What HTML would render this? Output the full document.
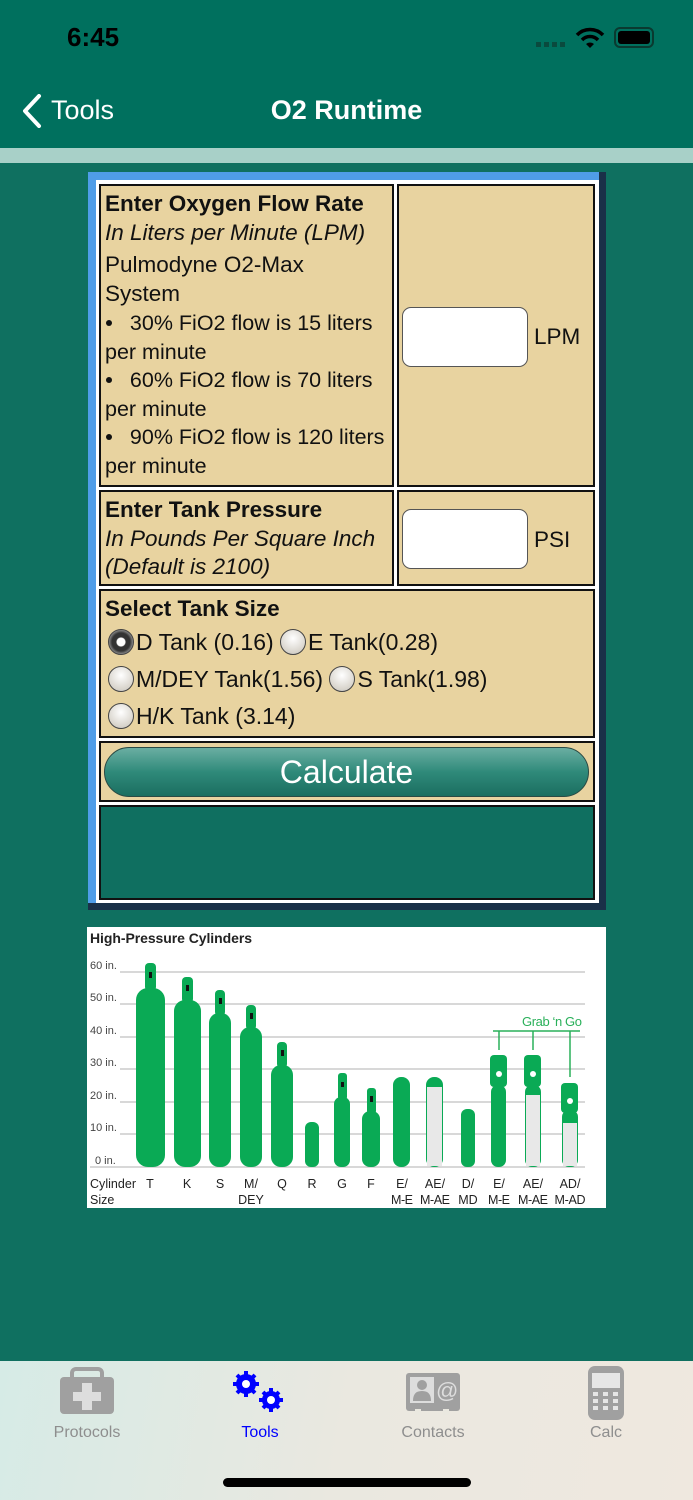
<!DOCTYPE html>
<html><head><meta charset="utf-8"><style>
*{margin:0;padding:0;box-sizing:border-box}
body{width:693px;height:1500px;position:relative;background:#0f7060;font-family:"Liberation Sans",sans-serif;overflow:hidden}
.a{position:absolute}
.cell{position:absolute;background:#e8d3a0;border:2px solid #111}
.t{font-size:22.5px;line-height:28.5px;color:#111;white-space:nowrap}
.b{display:inline-block;width:6px;height:6px;border-radius:50%;background:#111;vertical-align:4px;margin-left:1px}
.inp{position:absolute;background:#fff;border:1.5px solid #555;border-radius:9px}
.radio{display:inline-block;width:26px;height:26px;border-radius:50%;border:1.5px solid #444;background:radial-gradient(circle at 50% 35%,#fff,#d8d4cc 70%,#bbb);vertical-align:-5px;margin-right:2px}
.tab{position:absolute;top:1424px;font-size:16px;color:#8e8e8e;text-align:center;width:120px}
</style></head><body>
<div class="a" style="left:0;top:0;width:693px;height:148px;background:#00705e"></div>
<div class="a" style="left:67px;top:22px;font-size:26px;font-weight:bold;color:#000">6:45</div>
<div class="a" style="left:536px;top:42px;width:30px;height:5px;background:repeating-linear-gradient(90deg,#0a4a3e 0 5px,transparent 5px 8px)"></div>
<svg class="a" style="left:575px;top:27px" width="30" height="22" viewBox="0 0 30 22"><path d="M2 8 A18 18 0 0 1 28 8" stroke="#000" stroke-width="3.5" fill="none"/><path d="M7 13 A11 11 0 0 1 23 13" stroke="#000" stroke-width="3.5" fill="none"/><path d="M11 17 L15 21 L19 17 A6 6 0 0 0 11 17Z" fill="#000"/></svg>
<div class="a" style="left:614px;top:27px;width:40px;height:21px;border:2px solid #0a3a30;border-radius:6px;padding:2px"><div style="width:100%;height:100%;background:#000;border-radius:3px"></div></div>
<svg class="a" style="left:20px;top:94px" width="24" height="34" viewBox="0 0 24 34"><path d="M19 2 L5 17 L19 32" stroke="#fff" stroke-width="4" fill="none" stroke-linecap="round" stroke-linejoin="round"/></svg>
<div class="a" style="left:51px;top:95px;font-size:27px;color:#fff">Tools</div>
<div class="a" style="left:0;width:693px;top:95px;text-align:center;font-size:27px;color:#fff;font-weight:bold">O2 Runtime</div>
<div class="a" style="left:0;top:148px;width:693px;height:15px;background:#a8d0c8"></div>

<div class="a" style="left:88px;top:172px;width:518px;height:738px;background:#1a3048"></div>
<div class="a" style="left:88px;top:172px;width:511px;height:731px;background:#4f9de8"></div>
<div class="a" style="left:96px;top:180px;width:503px;height:723px;background:#fff"></div>

<div class="cell" style="left:99px;top:184px;width:295px;height:303px;padding:4px 4px">
<div class="t"><b>Enter Oxygen Flow Rate</b><br><i>In Liters per Minute (LPM)</i></div>
<div class="t" style="margin-top:4px">Pulmodyne O2-Max<br>System</div>
<div class="t" style="font-size:21.5px;line-height:28.5px;margin-top:1px"><span class="b"></span>&nbsp;&nbsp; 30% FiO2 flow is 15 liters<br>per minute<br><span class="b"></span>&nbsp;&nbsp; 60% FiO2 flow is 70 liters<br>per minute<br><span class="b"></span>&nbsp;&nbsp; 90% FiO2 flow is 120 liters<br>per minute</div>
</div>
<div class="cell" style="left:397px;top:184px;width:198px;height:303px"></div>
<div class="inp" style="left:402px;top:307px;width:126px;height:60px"></div>
<div class="a t" style="left:534px;top:323px">LPM</div>

<div class="cell" style="left:99px;top:490px;width:295px;height:96px;padding:4px 4px"><div class="t"><b>Enter Tank Pressure</b><br><i>In Pounds Per Square Inch<br>(Default is 2100)</i></div></div>
<div class="cell" style="left:397px;top:490px;width:198px;height:96px"></div>
<div class="inp" style="left:402px;top:509px;width:126px;height:60px"></div>
<div class="a t" style="left:534px;top:526px">PSI</div>

<div class="cell" style="left:99px;top:589px;width:496px;height:149px;padding:4px 4px">
<div class="t"><b>Select Tank Size</b></div>
<div class="t" style="line-height:37px;font-size:23px;padding-left:3px"><span class="radio" style="background:radial-gradient(circle,#fff 0 4px,#333 5px 9px,#888 12px)"></span>D Tank (0.16) <span class="radio"></span>E Tank(0.28)<br><span class="radio"></span>M/DEY Tank(1.56) <span class="radio"></span>S Tank(1.98)<br><span class="radio"></span>H/K Tank (3.14)</div>
</div>
<div class="cell" style="left:99px;top:741px;width:496px;height:61px"></div>
<div class="a" style="left:104px;top:747px;width:485px;height:50px;border-radius:25px;border:1.5px solid #2a4a44;background:linear-gradient(#6aaea2,#2f8a7a 50%,#1b6e60);color:#fff;font-size:32px;text-align:center;line-height:48px">Calculate</div>
<div class="cell" style="left:99px;top:805px;width:496px;height:95px;background:#0f6f60"></div>

<svg class="a" style="left:87px;top:927px" width="519" height="281" viewBox="87 927 519 281" font-family="Liberation Sans Narrow,Liberation Sans,sans-serif">
<rect x="87" y="927" width="519" height="281" fill="#fff"/>
<text x="90" y="943" font-size="14" font-weight="bold" fill="#222" textLength="162">High-Pressure Cylinders</text>
<g stroke="#ccc" stroke-width="1.5">
<line x1="120" y1="972" x2="585" y2="972"/><line x1="120" y1="1004" x2="585" y2="1004"/><line x1="120" y1="1037" x2="585" y2="1037"/><line x1="120" y1="1069" x2="585" y2="1069"/><line x1="120" y1="1102" x2="585" y2="1102"/><line x1="120" y1="1134" x2="585" y2="1134"/><line x1="90" y1="1167" x2="585" y2="1167"/></g>
<g font-size="11" fill="#444"><text x="90" y="969">60 in.</text><text x="90" y="1001">50 in.</text><text x="90" y="1034">40 in.</text><text x="90" y="1066">30 in.</text><text x="90" y="1099">20 in.</text><text x="90" y="1131">10 in.</text><text x="95" y="1164">0 in.</text></g>
<g fill="#0aaa55">
<rect x="136" y="988" width="29" height="179" rx="12"/><rect x="145" y="963" width="11" height="28" rx="4"/>
<rect x="174" y="1000" width="27" height="167" rx="11"/><rect x="182" y="977" width="11" height="26" rx="4"/>
<rect x="209" y="1013" width="22" height="154" rx="10"/><rect x="215" y="990" width="10" height="26" rx="4"/>
<rect x="240" y="1027" width="22" height="140" rx="10"/><rect x="246" y="1005" width="10" height="25" rx="4"/>
<rect x="271" y="1065" width="22" height="102" rx="10"/><rect x="277" y="1042" width="10" height="26" rx="4"/>
<rect x="305" y="1122" width="14" height="45" rx="6"/>
<rect x="334" y="1097" width="16" height="70" rx="7"/><rect x="338" y="1073" width="9" height="27" rx="3"/>
<rect x="362" y="1111" width="18" height="56" rx="8"/><rect x="367" y="1088" width="9" height="26" rx="3"/>
<rect x="393" y="1077" width="17" height="90" rx="8"/>
<rect x="426" y="1077" width="17" height="90" rx="8"/>
<rect x="461" y="1109" width="14" height="58" rx="6"/>
<rect x="491" y="1085" width="15" height="82" rx="7"/><rect x="490" y="1055" width="17" height="32" rx="4"/>
<rect x="525" y="1085" width="16" height="82" rx="7"/><rect x="524" y="1055" width="17" height="32" rx="4"/>
<rect x="562" y="1110" width="16" height="57" rx="7"/><rect x="561" y="1083" width="17" height="30" rx="4"/>
</g>
<g fill="#e8e8e8"><rect x="427" y="1087" width="15" height="79"/><rect x="526" y="1095" width="14" height="71"/><rect x="563" y="1123" width="14" height="43"/></g>
<g fill="#fff"><circle cx="499" cy="1074" r="3"/><circle cx="533" cy="1074" r="3"/><circle cx="570" cy="1101" r="3"/></g>
<g fill="#111"><rect x="149" y="972" width="3" height="6"/><rect x="186" y="985" width="3" height="6"/><rect x="219" y="998" width="3" height="6"/><rect x="250" y="1013" width="3" height="6"/><rect x="281" y="1050" width="3" height="6"/><rect x="341" y="1082" width="3" height="5"/><rect x="370" y="1096" width="3" height="6"/></g>
<text x="522" y="1026" font-size="13" fill="#2ab05a" textLength="60">Grab ‘n Go</text>
<g stroke="#2ab05a" stroke-width="1.5" fill="none"><path d="M493 1031 H580 M499 1031 V1050 M533 1031 V1050 M570 1031 V1077"/></g>
<g font-size="12.5" fill="#222" text-anchor="middle">
<text x="90" y="1188" text-anchor="start" textLength="46">Cylinder</text><text x="90" y="1204" text-anchor="start">Size</text>
<text x="150" y="1188">T</text><text x="187" y="1188">K</text><text x="220" y="1188">S</text><text x="251" y="1188">M/</text><text x="251" y="1204">DEY</text><text x="282" y="1188">Q</text><text x="312" y="1188">R</text><text x="342" y="1188">G</text><text x="371" y="1188">F</text>
<text x="402" y="1188">E/</text><text x="402" y="1204" textLength="22">M-E</text><text x="435" y="1188">AE/</text><text x="435" y="1204" textLength="30">M-AE</text><text x="468" y="1188">D/</text><text x="468" y="1204">MD</text><text x="499" y="1188">E/</text><text x="499" y="1204" textLength="22">M-E</text><text x="533" y="1188">AE/</text><text x="533" y="1204" textLength="30">M-AE</text><text x="570" y="1188">AD/</text><text x="570" y="1204" textLength="31">M-AD</text>
</g></svg>

<div class="a" style="left:0;top:1361px;width:693px;height:139px;background:linear-gradient(100deg,#d6ebe6,#eae8e0 50%,#efe8df)"></div>
<svg class="a" style="left:58px;top:1367px" width="58" height="50" viewBox="0 0 58 50"><rect x="14" y="2" width="30" height="12" rx="4" fill="none" stroke="#a0a0a0" stroke-width="4"/><rect x="2" y="10" width="54" height="37" rx="4" fill="#a0a0a0"/><path d="M24 16h10v9h9v9h-9v9h-10v-9h-9v-9h9z" fill="#ddd"/></svg>
<svg class="a" style="left:232px;top:1370px" width="58" height="46" viewBox="0 0 58 46"><g fill="#0000ff"><circle cx="14" cy="14" r="10"/><circle cx="39" cy="30" r="9"/></g><g stroke="#0000ff" stroke-width="4"><path d="M14 1v26M1 14h26M5 5l18 18M23 5L5 23"/><path d="M39 18v24M27 30h24M31 22l16 16M47 22l-16 16"/></g><circle cx="14" cy="14" r="4" fill="#fff"/><circle cx="39" cy="30" r="4" fill="#fff"/></svg>
<svg class="a" style="left:405px;top:1371px" width="56" height="44" viewBox="0 0 56 44"><rect x="1" y="2" width="54" height="38" rx="3" fill="#a0a0a0"/><rect x="5" y="6" width="24" height="26" fill="#ddd"/><circle cx="17" cy="14" r="5" fill="#a0a0a0"/><path d="M8 30c0-8 4-10 9-10s9 2 9 10z" fill="#a0a0a0"/><text x="31" y="27" font-size="22" fill="#ddd" font-family="Liberation Sans">@</text><rect x="10" y="38" width="6" height="6" fill="#eae8e0"/><rect x="38" y="38" width="6" height="6" fill="#eae8e0"/></svg>
<svg class="a" style="left:588px;top:1366px" width="36" height="54" viewBox="0 0 36 54"><rect x="0" y="0" width="36" height="54" rx="7" fill="#a0a0a0"/><rect x="4" y="7" width="28" height="15" fill="#e6e6e6"/><g fill="#e6e6e6"><rect x="5" y="26" width="5" height="4"/><rect x="15" y="26" width="5" height="4"/><rect x="25" y="26" width="5" height="4"/><rect x="5" y="33" width="5" height="4"/><rect x="15" y="33" width="5" height="4"/><rect x="25" y="33" width="5" height="4"/><rect x="5" y="40" width="5" height="4"/><rect x="15" y="40" width="5" height="4"/><rect x="25" y="40" width="5" height="4"/></g></svg>
<div class="tab" style="left:27px">Protocols</div>
<div class="tab" style="left:200px;color:#0000ff">Tools</div>
<div class="tab" style="left:373px">Contacts</div>
<div class="tab" style="left:546px">Calc</div>
<div class="a" style="left:223px;top:1478px;width:248px;height:9px;border-radius:5px;background:#000"></div>
</body></html>
